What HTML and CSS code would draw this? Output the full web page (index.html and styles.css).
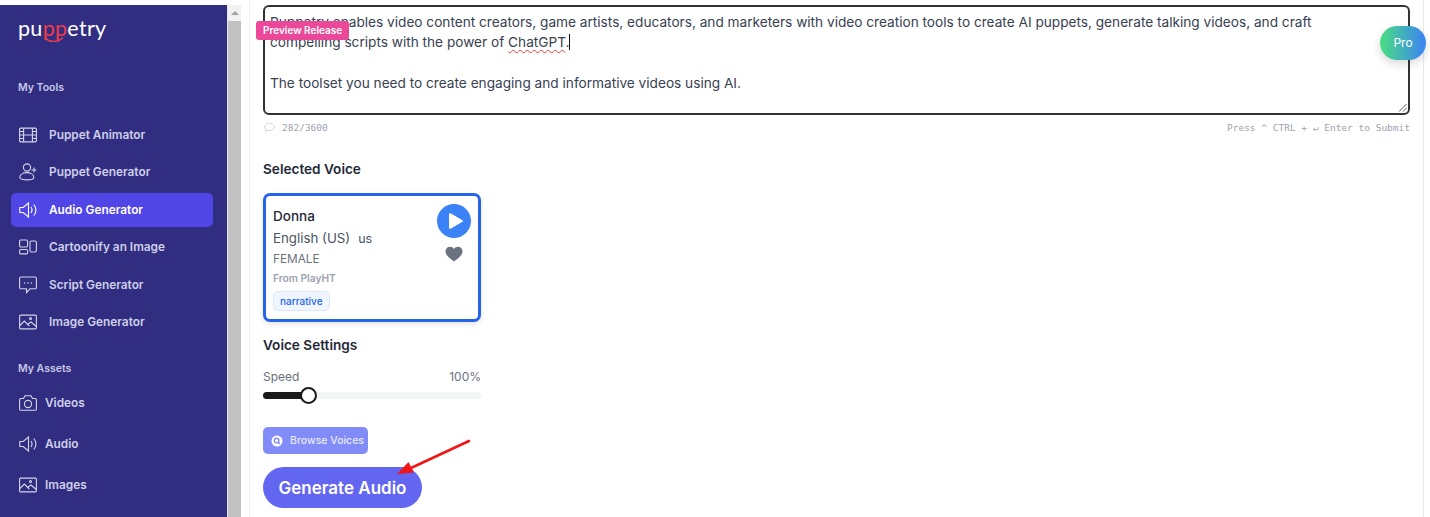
FILE: index.html
```html
<!DOCTYPE html>
<html lang="en">
<head>
<meta charset="utf-8">
<title>Puppetry Audio Generator</title>
<link rel="stylesheet" href="styles.css">
</head>
<body>
<div class="shell">
  <aside class="sidebar">
    <div class="logo">
      <span>pu<b>pp</b>etry</span>
      <svg class="smile" width="20" height="6" viewBox="0 0 20 6"><path d="M1.500 1c3 4.500 13 4.500 17 0" fill="none" stroke="#ef3b4a" stroke-width="1.400" stroke-linecap="round"/></svg>
    </div>
    <div class="section first">My Tools</div>
    <nav class="nav tools">
      <a class="item"><svg class="ico" viewBox="0 0 18 16"><rect x=".6" y="1.100" width="16.800" height="13.800" rx="1.200"/><path d="M4.600 1.100v13.800M13.400 1.100v13.800M.6 4.500h4M.6 8h16.800M.6 11.500h4M13.400 4.500h4M13.400 11.500h4"/></svg>Puppet Animator</a>
      <a class="item"><svg class="ico tall" viewBox="0 0 18 18"><circle cx="8" cy="4.500" r="3.600"/><path d="M.8 14.500c0-6.500 14-6.500 14 0 0 3.200-14 3.200-14 0zM15 4.500v5M12.500 7h5"/></svg>Puppet Generator</a>
      <a class="item active"><svg class="ico tall" viewBox="0 0 18 18"><path d="M.8 6.500h3.400L9.500 2v14l-5.300-4.500H.8zM12 6c1.400 2 1.400 4 0 6M14.800 3.500c2.600 3.300 2.600 7.700 0 11"/></svg>Audio Generator</a>
      <a class="item"><svg class="ico" viewBox="0 0 18 16"><rect x=".6" y="1" width="8" height="7" rx="1.200"/><rect x=".6" y="10.500" width="8" height="4.400" rx="1.200"/><rect x="11" y="2" width="6.400" height="11" rx="1.200"/></svg>Cartoonify an Image</a>
      <a class="item"><svg class="ico tall" viewBox="0 0 18 18"><path d="M2 1h14a1.400 1.400 0 0 1 1.400 1.400v9a1.400 1.400 0 0 1-1.400 1.400h-5l-3.500 3.700v-3.700H2a1.400 1.400 0 0 1-1.400-1.400v-9A1.400 1.400 0 0 1 2 1z"/><circle class="dot" cx="5.500" cy="7" r=".8"/><circle class="dot" cx="9" cy="7" r=".8"/><circle class="dot" cx="12.500" cy="7" r=".8"/></svg>Script Generator</a>
      <a class="item"><svg class="ico" viewBox="0 0 18 16"><rect x=".6" y="1.100" width="16.800" height="13.800" rx="1.200"/><path d="M.8 11.500l4.500-4.500 5 5M9 10l3-2 5.300 4.500"/><circle cx="11.500" cy="4.500" r="1"/></svg>Image Generator</a>
    </nav>
    <div class="section assets">My Assets</div>
    <nav class="nav">
      <a class="item asset"><svg class="ico tall" viewBox="0 0 18 18"><path d="M1.800 4.500h2.700L6 1.800h6l1.500 2.700h2.700a1.200 1.200 0 0 1 1.200 1.200v9.300a1.200 1.200 0 0 1-1.200 1.200H1.800a1.200 1.200 0 0 1-1.200-1.200V5.700a1.200 1.200 0 0 1 1.200-1.200z"/><circle cx="9" cy="10" r="3.600"/></svg>Videos</a>
      <a class="item asset"><svg class="ico tall" viewBox="0 0 18 18"><path d="M.8 6.500h3.400L9.500 2v14l-5.300-4.500H.8zM12 6c1.400 2 1.400 4 0 6M14.800 3.500c2.600 3.300 2.600 7.700 0 11"/></svg>Audio</a>
      <a class="item asset"><svg class="ico" viewBox="0 0 18 16"><rect x=".6" y="1.100" width="16.800" height="13.800" rx="1.200"/><path d="M.8 11.500l4.500-4.500 5 5M9 10l3-2 5.300 4.500"/><circle cx="11.500" cy="4.500" r="1"/></svg>Images</a>
    </nav>
  </aside>
  <div class="scrollbar"><div class="scroll-btn"></div><div class="scroll-thumb"></div></div>
  <main class="main">
    <div class="editor">
      <span class="preview">Preview Release</span>
      <p class="line">Puppetry enables video content creators, game artists, educators, and marketers with video creation tools to create AI puppets, generate talking videos, and craft</p>
      <p class="line">compelling scripts with the power of <span class="typo">ChatGPT</span>.<span class="caret"></span></p>
      <p class="line">&nbsp;</p>
      <p class="line">The toolset you need to create engaging and informative videos using AI.</p>
      <svg class="grip" width="9" height="9" viewBox="0 0 9 9"><path d="M8.500 1L1 8.500M8.500 5L5 8.500" stroke="#555" fill="none"/></svg>
    </div>
    <div class="meta">
      <span class="count"><svg class="bubble" width="11" height="9" viewBox="0 0 11 9"><path d="M5.500.5c2.800 0 5 1.600 5 3.500s-2.200 3.500-5 3.500c-.7 0-1.400-.1-2-.3L1.500 8.300l.4-1.900C1 5.700.5 4.900.5 4 .5 2.100 2.700.5 5.500.5z" fill="none" stroke="#d1d5db"/></svg>282/3600</span>
      <span>Press ^ CTRL + ↵ Enter to Submit</span>
    </div>
    <h2 class="heading voice-heading">Selected Voice</h2>
    <div class="card">
      <div class="card-info">
        <div class="name">Donna</div>
        <div class="lang">English (US)<span class="flag">us</span></div>
        <div class="gender">FEMALE</div>
        <div class="source">From PlayHT</div>
        <span class="tag">narrative</span>
      </div>
      <div class="card-actions">
        <div class="play"><svg width="16" height="18" viewBox="0 0 16 18"><path d="M2 2.200v13.600L14 9z" fill="#fff" stroke="#fff" stroke-width="2" stroke-linejoin="round"/></svg></div>
        <svg class="heart" width="18" height="16" viewBox="0 0 18 16"><path d="M9 15.500C5 12.500.5 9.500.5 5.200.5 2.500 2.500.7 4.900.7 6.600.7 8.100 1.600 9 3c.9-1.400 2.400-2.300 4.100-2.300 2.400 0 4.400 1.800 4.400 4.500 0 4.300-4.500 7.300-8.500 10.300z" fill="#6b7280"/></svg>
      </div>
    </div>
    <h2 class="heading settings-heading">Voice Settings</h2>
    <div class="speed-row"><span>Speed</span><span>100%</span></div>
    <div class="slider"><div class="slider-fill"></div><div class="slider-thumb"></div></div>
    <button class="browse"><svg class="browse-ico" width="12" height="12" viewBox="0 0 12 12"><circle cx="6" cy="6" r="5.500" fill="#fff"/><circle cx="5.600" cy="5.600" r="2.300" fill="none" stroke="#818cf8" stroke-width="1.400"/><path d="M7.300 7.300l1.600 1.600" stroke="#818cf8" stroke-width="1.400"/></svg>Browse Voices</button>
    <button class="generate">Generate Audio</button>
    <svg class="arrow" width="76" height="40" viewBox="0 0 76 40"><path d="M73 5L15 32" stroke="#f01616" stroke-width="2.600" stroke-linecap="round"/><path d="M1 38L12.500 26l5.500 10.500z" fill="#f01616"/></svg>
    <div class="pro">Pro</div>
  </main>
</div>
</body>
</html>
```
FILE: styles.css
```css
* { box-sizing: border-box; }
html, body { margin: 0; height: 100%; overflow: hidden; background: #fff; }
body { font-family: Inter, "Liberation Sans", sans-serif; color: #1f2937; }
.shell { display: flex; height: 517px; padding-top: 5px; overflow: hidden; }

.sidebar { width: 228px; flex: none; background: #312e81; border-right: 1px solid #e5e7eb; color: #c7c7e6; font-size: 12px; font-weight: 600; padding-left: 18px; overflow: hidden; }
.logo { position: relative; margin-top: 10px; height: 26px; font-family: Lato, sans-serif; font-size: 21.500px; line-height: 26px; font-weight: 400; color: #fff; letter-spacing: .3px; }
.logo b { color: #ef3b4a; font-weight: 400; }
.smile { position: absolute; left: 26px; top: 22px; }
.section { font-size: 10.500px; line-height: 14px; }
.section.first { margin-top: 40px; }
.section.assets { margin-top: 22.500px; }
.nav { display: flex; flex-direction: column; margin-left: -7px; width: 202px; }
.tools { margin-top: 22.500px; gap: 3.500px; }
.item { display: flex; align-items: center; height: 34px; padding-left: 8px; font-size: 11.850px; color: #cfcfea; }
.item .ico { width: 18px; height: 16px; margin-right: 12px; fill: none; stroke: #d4d4ec; stroke-width: 1.100; flex: none; }
.item .ico.tall { height: 18px; }
.item .ico .dot { fill: #d4d4ec; stroke: none; }
.item.active { background: #4f46e5; border-radius: 5px; color: #fff; }
.item.active .ico { stroke: #fff; }
.item.asset { height: 41px; }
.item.asset .ico { margin-right: 8px; }
.section.assets + .nav { margin-top: 7px; }

.scrollbar { width: 13px; margin-right: 8px; background: #c1c1c1; flex: none; position: relative; }
.scroll-btn { height: 16px; background: #f1f1f1; display: flex; align-items: center; justify-content: center; }
.scroll-btn::before { content: ""; border-left: 4px solid transparent; border-right: 4px solid transparent; border-bottom: 4px solid #a3a3a3; }

.main { position: relative; width: 1175px; flex: none; margin-top: -5px; padding: 5px 13px 0 13px; border-left: 1px solid #f0f0f2; border-right: 1px solid #e5e7eb; }
.editor { position: relative; height: 110px; border: 2px solid #333; border-radius: 6px; padding: 4.600px 5px; font-size: 13.650px; line-height: 20.500px; color: #374151; }
.line { margin: 0; white-space: nowrap; }
.typo { text-decoration: underline wavy #ef3b3b 1px; text-underline-offset: 2px; }
.caret { display: inline-block; width: 1px; height: 16px; background: #111; vertical-align: -3px; }
.preview { position: absolute; left: -9px; top: 14px; height: 19px; line-height: 19px; padding: 0 7px; background: #ec4899; color: #fff; border-radius: 3px; font-size: 10px; font-weight: 600; }
.grip { position: absolute; right: 1px; bottom: 1px; }
.meta { display: flex; justify-content: space-between; margin-top: 6px; font-family: "DejaVu Sans Mono", "Liberation Mono", monospace; font-size: 9.500px; line-height: 13px; color: #9ca3af; }
.bubble { margin: 0 7px 0 1px; vertical-align: -1px; }
.heading { margin: 0; font-size: 13.600px; line-height: 20px; font-weight: 600; color: #1f2937; }
.voice-heading { margin-top: 25px; }
.settings-heading { margin-top: 13px; }
.card { display: flex; justify-content: space-between; width: 218px; height: 129px; margin-top: 14px; padding: 10px 7px 0 7px; border: 3px solid #2563eb; border-radius: 7px; box-shadow: 0 2px 5px rgba(0,0,0,.12); }
.name { font-size: 13.500px; line-height: 20px; font-weight: 500; color: #1f2937; }
.lang { margin-top: 2px; font-size: 13.300px; line-height: 20px; color: #4b5563; }
.flag { margin-left: 8px; font-size: 12.500px; }
.gender { font-size: 11.800px; line-height: 20px; color: #6b7280; }
.source { font-size: 10.200px; line-height: 19px; font-weight: 600; color: #9ca3af; }
.tag { display: inline-block; margin-top: 3px; height: 20px; padding: 0 6px; border: 1px solid #dbe7fb; border-radius: 5px; background: #eff6ff; color: #2563eb; font-size: 10px; font-weight: 500; line-height: 18px; }
.card-actions { display: flex; flex-direction: column; align-items: center; gap: 8px; margin-top: -2px; }
.play { width: 34px; height: 34px; border-radius: 50%; background: #3b82f6; display: flex; align-items: center; justify-content: center; padding-left: 3px; }
.speed-row { display: flex; justify-content: space-between; width: 218px; margin-top: 13px; font-size: 12px; line-height: 18px; color: #6b7280; }
.slider { position: relative; width: 218px; height: 7px; margin-top: 6px; background: #f3f4f6; border-radius: 4px; }
.slider-fill { width: 46px; height: 7px; background: #1a1a1a; border-radius: 4px; }
.slider-thumb { position: absolute; left: 37px; top: -5px; width: 17px; height: 17px; border: 2px solid #1a1a1a; border-radius: 50%; background: #fff; }
.browse { display: flex; align-items: center; gap: 7px; width: 105px; height: 27px; margin-top: 28px; padding: 0 8px; border: 0; border-radius: 5px; background: #818cf8; color: #e8e9ff; font: 500 10.500px Inter, sans-serif; white-space: nowrap; }
.browse-ico { flex: none; }
.generate { display: block; width: 159px; height: 41px; margin-top: 13px; padding: 0; border: 0; border-radius: 21px; background: #6366f1; color: #fff; font: 600 17px Inter, sans-serif; }
.arrow { position: absolute; left: 146px; top: 436px; }
.pro { position: absolute; left: 1130px; top: 26px; width: 46px; height: 34px; border-radius: 17px; background: linear-gradient(90deg, #4ade80, #3b82f6); color: #fff; font-size: 12px; line-height: 34px; text-align: center; box-shadow: 0 4px 10px rgba(0,0,0,.15); }
```
